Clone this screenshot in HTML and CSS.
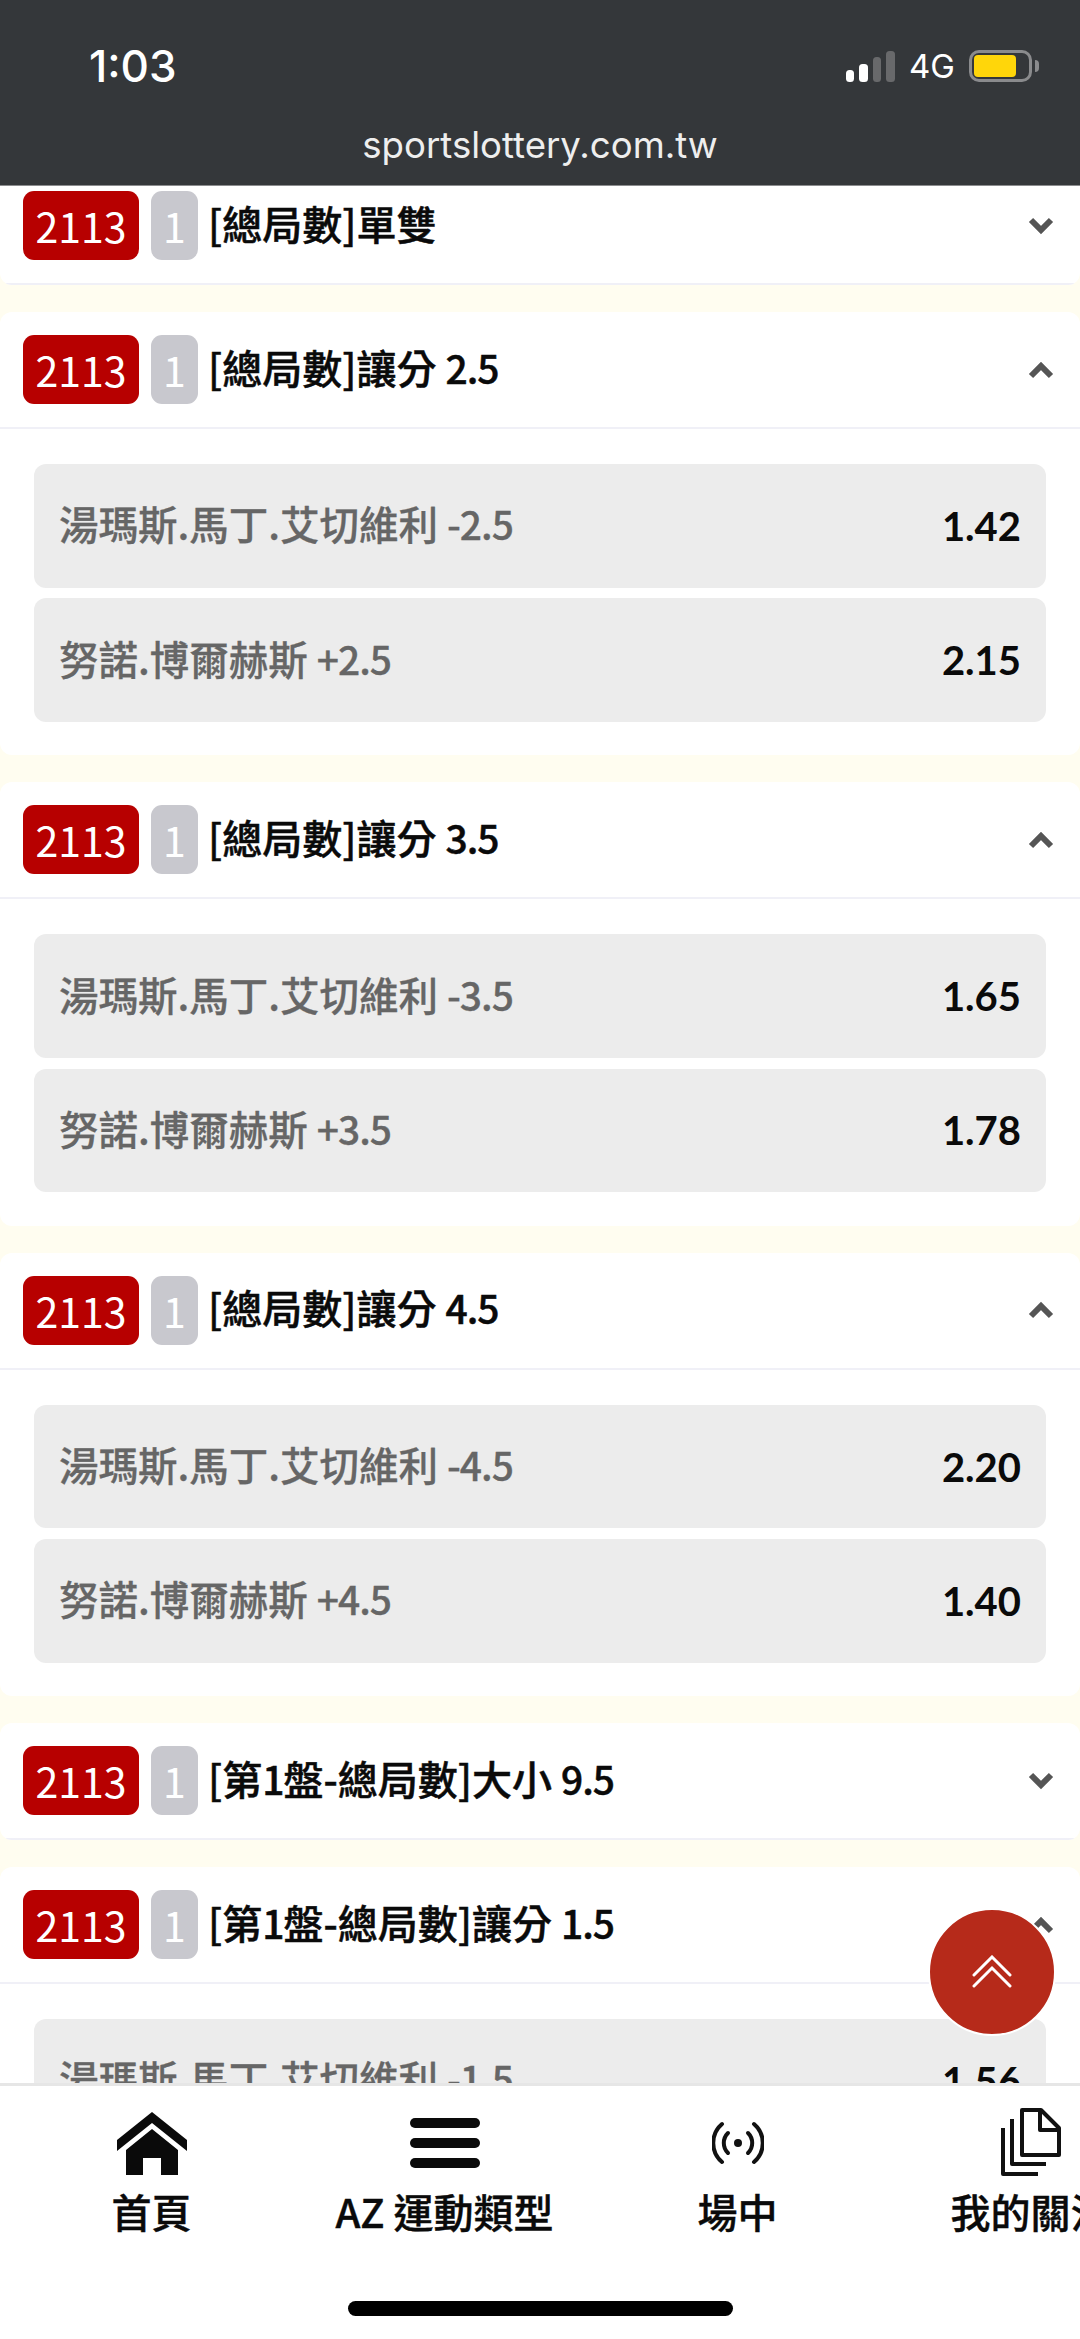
FILE: index.html
```html
<!DOCTYPE html>
<html lang="zh-Hant">
<head>
  <meta charset="UTF-8" />
  <meta name="viewport" content="width=device-width, initial-scale=1.0"/>
  <title>sportslottery.com.tw</title>
  <link rel="stylesheet" href="styles.css">
</head>
<body>

<div class="phone">

  <header class="browser-bar">
    <div class="status-row">
      <span class="clock">1:03</span>
      <div class="status-icons">
        <svg class="signal" width="49" height="31" viewBox="0 0 49 31">
          <rect x="0" y="19" width="8" height="12" rx="3.5" fill="#fff"/>
          <rect x="13" y="13" width="9" height="18" rx="3.5" fill="#fff"/>
          <rect x="27" y="6" width="8" height="25" rx="3.5" fill="#68696b"/>
          <rect x="40" y="0" width="9" height="31" rx="3.5" fill="#68696b"/>
        </svg>
        <span class="net">4G</span>
        <div class="battery"><div class="battery-fill"></div></div>
        <div class="battery-nub"></div>
      </div>
    </div>
    <div class="domain">sportslottery.com.tw</div>
  </header>

  <main class="markets">

    <section class="market">
      <div class="market-head">
        <span class="code">2113</span><span class="set">1</span>
        <span class="market-title">[總局數]單雙</span>
        <svg class="chev" width="26" height="18" viewBox="0 0 26 18"><path d="M3 3l10 10L23 3"/></svg>
      </div>
    </section>

    <section class="market">
      <div class="market-head">
        <span class="code">2113</span><span class="set">1</span>
        <span class="market-title">[總局數]讓分 <span class="num">2.5</span></span>
        <svg class="chev" width="26" height="18" viewBox="0 0 26 18"><path d="M3 15L13 5l10 10"/></svg>
      </div>
      <div class="market-body">
        <div class="odd"><span class="odd-name">湯瑪斯.馬丁.艾切維利 <span class="num">-2.5</span></span><span class="odd-value">1.42</span></div>
        <div class="odd"><span class="odd-name">努諾.博爾赫斯 <span class="num">+2.5</span></span><span class="odd-value">2.15</span></div>
      </div>
    </section>

    <section class="market">
      <div class="market-head">
        <span class="code">2113</span><span class="set">1</span>
        <span class="market-title">[總局數]讓分 <span class="num">3.5</span></span>
        <svg class="chev" width="26" height="18" viewBox="0 0 26 18"><path d="M3 15L13 5l10 10"/></svg>
      </div>
      <div class="market-body">
        <div class="odd"><span class="odd-name">湯瑪斯.馬丁.艾切維利 <span class="num">-3.5</span></span><span class="odd-value">1.65</span></div>
        <div class="odd"><span class="odd-name">努諾.博爾赫斯 <span class="num">+3.5</span></span><span class="odd-value">1.78</span></div>
      </div>
    </section>

    <section class="market">
      <div class="market-head">
        <span class="code">2113</span><span class="set">1</span>
        <span class="market-title">[總局數]讓分 <span class="num">4.5</span></span>
        <svg class="chev" width="26" height="18" viewBox="0 0 26 18"><path d="M3 15L13 5l10 10"/></svg>
      </div>
      <div class="market-body">
        <div class="odd"><span class="odd-name">湯瑪斯.馬丁.艾切維利 <span class="num">-4.5</span></span><span class="odd-value">2.20</span></div>
        <div class="odd"><span class="odd-name">努諾.博爾赫斯 <span class="num">+4.5</span></span><span class="odd-value">1.40</span></div>
      </div>
    </section>

    <section class="market">
      <div class="market-head">
        <span class="code">2113</span><span class="set">1</span>
        <span class="market-title">[第<span class="num">1</span>盤-總局數]大小 <span class="num">9.5</span></span>
        <svg class="chev" width="26" height="18" viewBox="0 0 26 18"><path d="M3 3l10 10L23 3"/></svg>
      </div>
    </section>

    <section class="market">
      <div class="market-head">
        <span class="code">2113</span><span class="set">1</span>
        <span class="market-title">[第<span class="num">1</span>盤-總局數]讓分 <span class="num">1.5</span></span>
        <svg class="chev" width="26" height="18" viewBox="0 0 26 18"><path d="M3 15L13 5l10 10"/></svg>
      </div>
      <div class="market-body">
        <div class="odd"><span class="odd-name">湯瑪斯.馬丁.艾切維利 <span class="num">-1.5</span></span><span class="odd-value">1.56</span></div>
      </div>
    </section>

  </main>

  <!-- back to top -->
  <div class="to-top">
    <svg width="40" height="34" viewBox="0 0 40 34" fill="none" stroke="#fff" stroke-width="3" stroke-linecap="round">
      <path d="M2 20L20 2l18 18"/>
      <path d="M2 31L20 13l18 18"/>
    </svg>
  </div>

  <nav class="tabbar">
    <div class="tabs">
      <div class="tab">
        <div class="tab-icon">
          <svg width="70" height="63" viewBox="0 0 70 63" fill="#0a0a0a">
            <path d="M35 0L70 28v11L35 11 0 39V28z"/>
            <path d="M35 17L61 38v25H44V46H26v17H9V38z"/>
          </svg>
        </div>
        <span class="tab-label">首頁</span>
      </div>
      <div class="tab">
        <div class="tab-icon">
          <svg width="70" height="50" viewBox="0 0 70 50" fill="#0a0a0a">
            <rect x="0" y="0" width="70" height="10" rx="5"/>
            <rect x="0" y="20" width="70" height="10" rx="5"/>
            <rect x="0" y="40" width="70" height="10" rx="5"/>
          </svg>
        </div>
        <span class="tab-label">AZ 運動類型</span>
      </div>
      <div class="tab">
        <div class="tab-icon">
          <svg width="52" height="44" viewBox="0 0 52 44" fill="none" stroke="#111" stroke-width="4" stroke-linecap="round">
            <circle cx="26" cy="22" r="4" fill="#111" stroke="none"/>
            <path d="M16 12a14 14 0 0 0 0 20"/>
            <path d="M36 12a14 14 0 0 1 0 20"/>
            <path d="M10 3a25 25 0 0 0 0 38"/>
            <path d="M42 3a25 25 0 0 1 0 38"/>
          </svg>
        </div>
        <span class="tab-label">場中</span>
      </div>
      <div class="tab">
        <div class="tab-icon">
          <svg width="60" height="70" viewBox="0 0 60 70" fill="none" stroke="#111" stroke-width="4" stroke-linejoin="round">
            <path d="M21 2h19l18 18v27H21z"/>
            <path d="M39 2v20h19"/>
            <path d="M11 11v45h34"/>
            <path d="M2 20v46h35"/>
          </svg>
        </div>
        <span class="tab-label">我的關注</span>
      </div>
    </div>
    <div class="home-bar"></div>
  </nav>

</div>

</body>
</html>
```

FILE: styles.css
```css
body {
  margin: 0;
  font-family: "Noto Sans CJK TC", "Noto Sans", sans-serif;
  color: #111;
}

.phone {
  position: relative;
  height: 100vh;
  display: flex;
  flex-direction: column;
  overflow: hidden;
  background: #fffdf0;
}

/* browser chrome */
.browser-bar {
  flex: none;
  height: 186px;
  box-sizing: border-box;
  padding-top: 43px;
  background: #34373a;
  border-bottom: 1px solid #8b8c8e;
  color: #fff;
}

.status-row {
  display: flex;
  justify-content: space-between;
  align-items: center;
  height: 46px;
  padding: 0 41px 0 89px;
}

.clock {
  font-family: Inter, sans-serif;
  font-size: 44px;
  font-weight: 500;
}

.status-icons {
  display: flex;
  align-items: center;
}

.net {
  margin-left: 14px;
  font-family: Inter, sans-serif;
  font-size: 33px;
}

.battery {
  margin-left: 14px;
  width: 63px;
  height: 32px;
  box-sizing: border-box;
  padding: 2px 13px 2px 2px;
  border: 3px solid #8a8b8d;
  border-radius: 10px;
}

.battery-fill {
  height: 100%;
  background: #ffd60a;
  border-radius: 4px;
}

.battery-nub {
  margin-left: 3px;
  width: 4px;
  height: 12px;
  background: #8a8b8d;
  border-radius: 0 4px 4px 0;
}

.domain {
  margin-top: 34px;
  text-align: center;
  font-family: Inter, sans-serif;
  font-size: 36.6px;
  color: #eeeeee;
}

/* market list, scrolled a little past the first card */
.markets {
  flex: 1;
  min-height: 0;
  overflow: hidden;
}

.market {
  background: #fff;
  border-radius: 12px;
  margin-bottom: 27px;
  overflow: hidden;
}

.market:first-child {
  margin-top: -18px;
}

.market-head {
  display: flex;
  align-items: center;
  height: 115px;
  padding: 0 26px 0 23px;
  border-bottom: 2px solid #f0f0f7;
}

.code {
  width: 116px;
  height: 69px;
  line-height: 69px;
  text-align: center;
  background: #b70000;
  color: #fff;
  font-size: 41px;
  border-radius: 11px;
}

.set {
  width: 47px;
  height: 69px;
  line-height: 69px;
  margin-left: 12px;
  text-align: center;
  background: #c8c8ce;
  color: #fff;
  font-size: 41px;
  border-radius: 11px;
}

.market-title {
  flex: 1;
  margin-left: 10px;
  padding-bottom: 6px;
  font-size: 40px;
  font-weight: 500;
  color: #0a0a0a;
  -webkit-text-stroke: 0.5px #0a0a0a;
}

/* digits run tighter than the Chinese around them */
.num {
  font-size: 39px;
  letter-spacing: -1px;
}

.chev {
  fill: none;
  stroke: #555;
  stroke-width: 6;
}

.market-body {
  padding: 35px 34px 33.5px;
  display: flex;
  flex-direction: column;
  gap: 10.5px;
}

.odd {
  display: flex;
  justify-content: space-between;
  align-items: center;
  height: 123.7px;
  padding: 0 25px;
  background: #ececec;
  border-radius: 12px;
}

.odd-name {
  padding-bottom: 6px;
  font-size: 39.5px;
  color: #666;
  font-weight: 500;
  -webkit-text-stroke: 0.3px #666;
}

.odd-value {
  font-family: Lato, sans-serif;
  font-size: 40px;
  font-weight: 700;
  color: #0a0a0a;
}

/* floating button */
.to-top {
  position: absolute;
  left: 928px;
  top: 1908px;
  width: 124px;
  height: 124px;
  display: flex;
  justify-content: center;
  align-items: center;
  background: #b62a1a;
  border: 2px solid #fff;
  border-radius: 50%;
}

/* bottom tabs */
.tabbar {
  flex: none;
  height: 256px;
  box-sizing: border-box;
  padding-top: 22px;
  background: #fff;
  border-top: 3px solid #e6e6e6;
  overflow: hidden;
}

.tabs {
  display: grid;
  grid-auto-flow: column;
  grid-auto-columns: 293px;
  padding-left: 5px;
}

.tab {
  display: flex;
  flex-direction: column;
  align-items: center;
  white-space: nowrap;
}

.tab-icon {
  height: 70px;
  display: flex;
  justify-content: center;
  align-items: center;
}

.tab-label {
  margin-top: 11px;
  font-size: 40px;
  font-weight: 500;
  line-height: 44px;
  color: #0a0a0a;
  -webkit-text-stroke: 0.4px #0a0a0a;
}

.home-bar {
  width: 385px;
  height: 15px;
  margin: 68px auto 0;
  background: #000;
  border-radius: 8px;
}
```
